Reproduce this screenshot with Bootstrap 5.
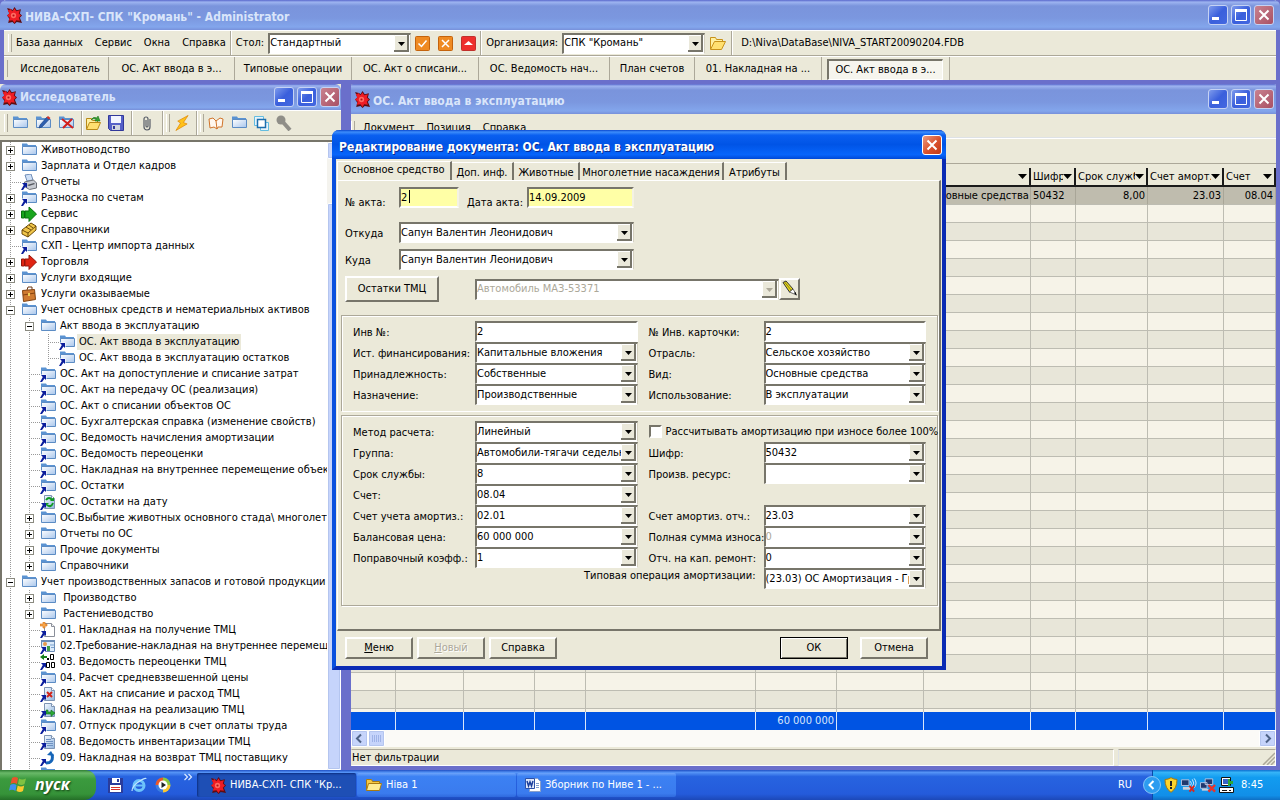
<!DOCTYPE html>
<html lang="ru">
<head>
<meta charset="utf-8">
<meta name="viewport" content="width=device-width, initial-scale=1">
<title>НИВА-СХП</title>
<link href="https://cdn.jsdelivr.net/npm/bootstrap@5.3.0/dist/css/bootstrap.min.css" rel="stylesheet">
<style>
:root{--face:#ebe9d9;--shade:#aca899;--frame:#6a6fcb;--deep:#77756a}
body{font-family:"DejaVu Sans Condensed","DejaVu Sans",sans-serif;font-size:11px;line-height:16px;color:#000;background:#5d66c6}
button,input,select{font:inherit;color:inherit;border-radius:0}
svg{flex:none;display:block}
.face{background:var(--face)}
.titlebar{height:26px;gap:3px;padding:0 6px 0 5px;background:linear-gradient(#5a68cc,#9db4f0 7%,#7a94dc 20%,#7b97df 60%,#83a6ec 90%,#7790da);color:#d9e5fa;font-size:12px;font-weight:bold;border-radius:6px 6px 0 0}
.titlebar.tall{height:30px}
.cap{width:20px;height:20px;padding:0;border:1px solid #c5d2f4;border-radius:3px;background:linear-gradient(135deg,#7e9bec,#3a5fdc 50%,#4468e0);display:flex;align-items:center;justify-content:center}
.cap-x{background:linear-gradient(135deg,#c9828f,#a95064)}
.cap-hot{border-color:#fff;background:linear-gradient(135deg,#eb9a80,#d9502b 55%,#c13a18)}
.grip{width:4px;align-self:stretch;margin:3px 0;border-left:1px solid #fff;border-right:1px solid var(--shade)}
.vsep{width:2px;align-self:stretch;border-left:1px solid var(--shade);border-right:1px solid #fff}
.link-plain{color:inherit;text-decoration:none;white-space:nowrap}
.field{height:21px;min-width:0;width:100%;padding:0 1px 1px 0;line-height:16px;background-color:#fff;border:2px solid;border-color:#77756a #fff #fff #77756a;outline:0;appearance:none;text-overflow:clip}
select.field{padding-right:16px;border-width:2px 1px 1px 2px;border-color:#77756a #d4d0c0 #fff #77756a;
background-image:url("data:image/svg+xml,%3Csvg xmlns='http://www.w3.org/2000/svg' width='15' height='17'%3E%3Cpath fill='%23eae8da' d='M0 0h15v17H0z'/%3E%3Cpath fill='none' stroke='%23fff' d='M.5 16V.5H14'/%3E%3Cpath fill='none' stroke='%2377756a' stroke-width='2' d='M0 16h14V0'/%3E%3Cpath d='M4 7h7l-3.5 4z'/%3E%3C/svg%3E");background-repeat:no-repeat;background-position:right 1px top 0}
.field:disabled{color:#aca899;opacity:1}
select.field.dim{background-image:url("data:image/svg+xml,%3Csvg xmlns='http://www.w3.org/2000/svg' width='15' height='17'%3E%3Cpath fill='%23eae8da' d='M0 0h15v17H0z'/%3E%3Cpath fill='none' stroke='%23fff' d='M.5 16V.5H14'/%3E%3Cpath fill='none' stroke='%2377756a' stroke-width='2' d='M0 16h14V0'/%3E%3Cpath fill='%23aca899' d='M4 7h7l-3.5 4z'/%3E%3C/svg%3E")}
.field.must{background-color:#ffffa6;border-right-color:#f4f2e4}
.caret{background-image:linear-gradient(#000,#000);background-size:1px 13px;background-position:8px 1px;background-repeat:no-repeat}
.raised{height:22px;padding:0 0 1px;background:var(--face);border:2px solid;border-color:#fff var(--deep) var(--deep) #fff;line-height:16px}
.raised:disabled{color:#aca899;text-shadow:1px 1px #fff}
.raised.main{border:1px solid #000;box-shadow:inset 1px 1px #fff,inset -1px -1px var(--deep)}

/* main window */
.app{height:84px;border:solid var(--frame);border-width:0 4px 4px}
.app .titlebar{margin:0 -4px}
.bar-menu{height:26px;border-top:1px solid #fff;border-bottom:1px solid var(--shade)}
.bar-tasks{height:24px;border-top:1px solid #fff;display:grid;grid-template-columns:8px 97px 126px 117px 127px 131px 85px 127px 127px 1fr}
.bar-tasks>*{border:0;border-right:1px solid var(--shade);background:none;padding:0;white-space:nowrap}
.bar-tasks .task-on{margin:2px 6px 0 5px;border:solid;border-width:2px 1px 1px 2px;border-color:#77756a #fff #fff #77756a;background:#f6f5ee}
.bar-tasks>:last-child{border-right:0;border-left:1px solid var(--shade)}
.pick{width:143px;flex:none}

/* explorer */
.explorer{width:347px;border:solid var(--frame);border-width:0 6px 0 0}
.explorer .titlebar{padding:0 1px 0 0}
.tools{height:26px;gap:7px;border-top:1px solid #fff;border-bottom:1px solid var(--shade)}
.tools .vsep{margin-right:-5px}
.tools .grip{margin-right:-3px}
.tree-pane{border:solid #77756a;border-width:2px 0 0 2px;background:#fff}
.tree{list-style:none;margin:0;padding:0}
.tree li{display:flex;height:16px;white-space:nowrap}
.tree .guide{width:19px;flex:none;background:linear-gradient(#999 50%,transparent 50%) 8px 0/1px 2px repeat-y}
.tree .guide i{display:block;height:1px;margin:8px 0 0 8px;background:linear-gradient(90deg,#999 50%,transparent 50%) 0 0/2px 1px}
.tree .knob{width:9px;height:9px;margin:4px 0 0 4px;border:1px solid #8a8a80;background:#fff}
.tree .caption-text{padding:0 2px;margin-left:2px}
.tree .on{background:var(--face)}
.vscroll{width:14px;background:#f4f3ee}
.thumb{background:#c6d4fb;border:1px solid #fff;outline:1px solid #b4c5ef;outline-offset:-2px;border-radius:2px}

/* grid window */
.gridwin{border:solid var(--frame);border-width:0 4px 4px}
.gridwin .titlebar{margin:0 -4px;height:30px;border-left:1px solid #4850b8}
.ledger{table-layout:fixed;width:100%;border-collapse:separate;border-spacing:0}
.ledger th{height:19px;padding:0 2px;font-weight:normal;border-right:2px solid #1a1a1a;border-bottom:2px solid #1a1a1a;background:var(--face)}
.ledger td{height:18px;padding:0 2px;line-height:16px;border-right:1px solid #bdbcb2;border-bottom:1px solid #bdbcb2;background:#f6f3e8;overflow:hidden;white-space:nowrap}
.ledger tr:nth-child(odd) td{background:#e8e6d9}
.ledger tbody tr:first-child td{background:#bfbcae;border-right-color:#a9a698}
.ledger tfoot td,.ledger tr:nth-child(odd) td.sum{background:#0054e3}
.ledger tfoot td{color:#d8e6fb;border-right-color:#d8e6fb;border-bottom:0;text-align:right}
.hscroll{height:17px;background:#fbfaf7}
.status>*{border:1px solid;border-color:var(--shade) #fff #fff transparent;height:17px;margin-top:2px}

/* dialog */
.dialog{position:absolute;left:332px;top:130px;width:614px;height:540px;border:solid;border-width:0 4px 4px;border-color:#0a3fd0 #0a2bb4 #0a2bb4 #0a50de;border-radius:7px 7px 0 0}
.dialog .titlebar{margin:0 -4px;height:29px;padding:0 4px 0 7px;border-radius:7px 7px 0 0;color:#fff;text-shadow:1px 1px #0a2a90;background:linear-gradient(#0a47cf,#3d8dfb 7%,#0a5ff0 18%,#0054e6 50%,#0765fb 85%,#0048d6)}
.tabs{height:22px;padding:2px 1px 0 1px}
.tabs button{border:0;border-top:1px solid #fff;border-right:2px solid var(--deep);background:none;padding:2px 0 0;height:19px;margin-top:1px;white-space:nowrap;line-height:16px}
.tabs button.active{height:20px;margin-top:0;padding:0 0 3px;background:var(--face);border-left:1px solid #fff}
.page{border:solid;border-width:1px 2px 2px 1px;border-color:#fff var(--deep) var(--deep) #fff;margin:-1px 1px 0;padding:6px 1px 22px 3px}
.lines{display:grid;row-gap:6px;padding-left:4px;margin-bottom:13px}
.spaced{padding-top:5px}
.groupbox{border:1px solid var(--shade);box-shadow:inset 1px 1px #fff,1px 1px #fff;padding:5px 11px 0 11px;display:grid;grid-template-columns:122px 163fr 11px 115px 163fr;grid-auto-rows:21px}
.groupbox label{white-space:nowrap;padding-top:4px}
.groupbox .flush{padding-top:0}
.tick{appearance:none;flex:none;width:13px;height:13px;margin:0;background:#fff;border:2px solid;border-color:#77756a #fff #fff #77756a}
.foot{padding:6px 14px 7px 9px}
.foot .raised{width:68px}

/* taskbar */
.taskbar{height:30px;background:linear-gradient(#1f4fc4,#5594f6 8%,#2763e0 22%,#245bdb 80%,#1c48b8);color:#fff}
.start{width:96px;border:0;border-radius:0 10px 12px 0;background:linear-gradient(#2f7d33,#69b968 10%,#3b9a3e 30%,#369339 80%,#246e27);color:#fff;font:italic bold 16px "Open Sans","Noto Sans",sans-serif;text-shadow:1px 1px 2px #123d12;padding:0 0 2px 9px}
.winbtn{width:159px;height:24px;margin:3px 1px 0 0;padding:0 8px;border:0;border-radius:2px;background:linear-gradient(#6ea4fa,#3c81f3 15%,#3a7bee 85%,#2f69dd);color:#fff;white-space:nowrap}
.winbtn.on{background:#1e4fb5;box-shadow:inset 1px 1px 2px #0d2f80}
.tray{width:128px;gap:3px;background:linear-gradient(#0d6fd0,#35b4f8 8%,#129cf0 25%,#118fe8 85%,#0f6fc4);border-left:1px solid #0a4aa8}
.tray .chevron{margin-left:-10px}
</style>
</head>
<body class="vh-100 overflow-hidden d-flex flex-column position-relative">

<svg width="0" height="0" class="position-absolute" aria-hidden="true">
<defs>
<linearGradient id="gf" x1="0" y1="0" x2="1" y2="1"><stop offset="0" stop-color="#fff"/><stop offset="1" stop-color="#a9c6ec"/></linearGradient>
<linearGradient id="gg" x1="0" y1="0" x2="1" y2="1"><stop offset="0" stop-color="#f6fbff"/><stop offset="1" stop-color="#8fb4e0"/></linearGradient>
<symbol id="star" viewBox="0 0 16 16"><path fill="#5c0d12" d="M4 0l3 3 2-3 2 3 4-1-1 4 2 2-2 2 2 5-5-1-2 2-2-2-4 1 1-4-2-3 2-2-2-5 4 1z"/><path fill="#ee1c24" d="M4.500 1.500l2.500 2.500 2-2.500 1.500 2.500 3.500-1-1 3 2 2-2 2 1 3-3.500-.5L9 15l-2-2.500-3.500.5 1-3L2 8l2-2-1.500-3.500 2 .5z"/><circle cx="8" cy="8" r="2.500" fill="#ff6a60"/><circle cx="8" cy="8" r="1" fill="#b01218"/></symbol>
<symbol id="folder" viewBox="0 0 16 16"><path fill="#5b93d2" d="M1 1.500h5l1 1.500h8v3H1z"/><path fill="url(#gf)" stroke="#5c8cc4" d="M1.500 4.500h14v8h-14z"/></symbol>
<symbol id="arrow" viewBox="0 0 16 16"><path fill="#0a1d9c" d="M1 9h5v5l-1.500-1.500L2 16H0l2.800-5z"/></symbol>
<symbol id="sfolder" viewBox="0 0 16 16"><use href="#folder"/><path fill="#fff" d="M0 8.500h6.500V14H0z"/><use href="#arrow"/></symbol>
<symbol id="page" viewBox="0 0 16 16"><path fill="url(#gg)" stroke="#7d94b4" d="M4.500 1.500h7l3 3v10h-10z"/><path fill="#fff" stroke="#7d94b4" d="M11.500 1.500v3h3"/></symbol>
<symbol id="printer" viewBox="0 0 16 16"><path fill="#cfe0f6" stroke="#6f8db8" d="M4 1l6-1 2 6-6 1z"/><path fill="#c8cbd2" stroke="#6d7078" d="M3.500 8l9-2 3 3v5l-7 1.500-5-3z"/><path fill="#55585f" d="M6 11l7-2 1 1-6 2z"/><use href="#arrow"/></symbol>
<symbol id="garrow" viewBox="0 0 16 16"><path fill="#19a51d" stroke="#08720d" d="M.5 5h3v7h-3zM4 5h4V1l7.500 7L8 15.500V12H4z"/></symbol>
<symbol id="rarrow" viewBox="0 0 16 16"><path fill="#e02412" stroke="#95140a" d="M.5 5h3v7h-3zM4 5h4V1l7.500 7L8 15.500V12H4z"/></symbol>
<symbol id="book" viewBox="0 0 16 16"><path fill="#f1c64a" stroke="#6d4b08" d="M1 8l9-7 5 3v4l-8 7-6-3z"/><path fill="none" stroke="#6d4b08" d="M1 8l6 3 8-7M7 11v4M5 5l5 3M8 3l4 3"/></symbol>
<symbol id="case" viewBox="0 0 16 16"><path fill="none" stroke="#6b3510" d="M6 4l1-3 4 0v3"/><path fill="#cf7a30" stroke="#84430f" d="M1.500 4.500l12-1 1 10-12 2z"/><path stroke="#84430f" d="M2 9l12-2"/><path fill="#f2cf58" d="M7 7h2v3H7z"/></symbol>
<symbol id="refresh" viewBox="0 0 16 16"><use href="#page"/><path fill="none" stroke="#119a22" stroke-width="2" d="M6 6q3-4 6 0M13 9q-2 5-6 2"/><path fill="#119a22" d="M10 7h4V3zM9 9H5v4z"/><use href="#arrow"/></symbol>
<symbol id="padd" viewBox="0 0 16 16"><path fill="#fff" stroke="#8a8f9a" d="M4.500 1.500h7l3 3v10h-10z"/><path fill="#f6f6f6" stroke="#8a8f9a" d="M11.500 1.500v3h3"/><path fill="#f7a64a" stroke="#d9731a" stroke-width=".6" d="M3 0h2v2h2v2H5v2H3V4H0V2h3z"/><use href="#arrow"/></symbol>
<symbol id="pform" viewBox="0 0 16 16"><path fill="#dcebfa" stroke="#6c8db6" d="M1.500 2.500h13v11h-13z"/><path fill="#6c8db6" d="M1 2h14v2H1z"/><circle cx="5" cy="6" r="2" fill="#e79a4a"/><path fill="#3f9f48" d="M7 8h3v5H7z"/><path stroke="#7ba1cf" d="M10 7h4M11 9.500h3"/><path fill="#fff" d="M0 9h6v5H0z"/><use href="#arrow"/></symbol>
<symbol id="reval" viewBox="0 0 16 16"><path fill="#15801a" d="M0 3l4-3v2h3v2H4v2z"/><path fill="none" stroke="#000" d="M10.500.5h3v5h-3zM6.500 8.500h3v5h-3zM11.500 8.500h3v5h-3z"/><path d="M7 4h2v2H7z"/><use href="#arrow"/></symbol>
<symbol id="pdel" viewBox="0 0 16 16"><use href="#page"/><path stroke="#d0231a" stroke-width="2" d="M7 6l5 5M12 6l-5 5"/><use href="#arrow"/></symbol>
<symbol id="psell" viewBox="0 0 16 16"><use href="#page"/><path fill="#2ba838" stroke="#0d6d18" stroke-width=".6" d="M6 8v4h5v2.500l4-3.500-4-3v2H8V8z"/><use href="#arrow"/></symbol>
<symbol id="ptext" viewBox="0 0 16 16"><use href="#page"/><path stroke="#6f92c2" d="M6 5.500h5M6 7.500h7M6 9.500h7M7 11.500h6"/><use href="#arrow"/></symbol>
<symbol id="back" viewBox="0 0 16 16"><path fill="none" stroke="#1565b8" stroke-width="3" d="M6 13q8 0 6-9"/><path fill="#1565b8" d="M7 5l4-4 3 5z"/><use href="#arrow"/></symbol>
<symbol id="openf" viewBox="0 0 18 16"><path fill="#fff0a0" stroke="#c8921a" d="M1.500 14V2.500h5l1 2h6V7"/><path fill="#ffe070" stroke="#c8921a" d="M1.500 14.500l4-8h11l-4 8z"/></symbol>
<symbol id="shutf" viewBox="0 0 17 16"><path fill="#f6c944" stroke="#a87a12" d="M1.500 13.500v-11h5l1 2h7v3"/><path fill="#ffec94" stroke="#a87a12" d="M1.500 13.500l2-7h13l-2 7z"/></symbol>
<symbol id="xx" viewBox="0 0 12 12"><path stroke="#fff" stroke-width="2" d="M1.500 1.500l9 9M10.500 1.500l-9 9"/></symbol>
<symbol id="mx" viewBox="0 0 12 12"><path fill="none" stroke="#fff" d="M.5.5h11v11H.5z"/><path fill="#fff" d="M0 0h12v3H0z"/></symbol>
<symbol id="mn" viewBox="0 0 12 12"><path fill="#fff" d="M0 8h7v3H0z"/></symbol>
</defs>
</svg>

<!-- main window -->
<header class="app face flex-shrink-0">
  <div class="titlebar tall d-flex align-items-center">
    <svg width="17" height="17"><use href="#star"/></svg>
    <span class="flex-fill text-nowrap pt-1">НИВА-СХП- СПК "Кромань" - Administrator</span>
    <button class="cap" aria-label="Свернуть"><svg width="12" height="12"><use href="#mn"/></svg></button>
    <button class="cap" aria-label="Развернуть"><svg width="12" height="12"><use href="#mx"/></svg></button>
    <button class="cap cap-x" aria-label="Закрыть"><svg width="12" height="12"><use href="#xx"/></svg></button>
  </div>
  <div class="bar-menu d-flex align-items-center">
    <span class="grip ms-1"></span>
    <nav class="d-flex gap-2">
      <a href="#" class="link-plain ps-1 me-1">База данных</a><a href="#" class="link-plain me-1">Сервис</a><a href="#" class="link-plain me-1">Окна</a><a href="#" class="link-plain me-1">Справка</a>
    </nav>
    <span class="vsep me-1"></span>
    <label for="desk" class="pe-1">Стол:</label>
    <div class="pick"><select id="desk" class="field"><option>Стандартный</option></select></div>
    <div class="d-flex ps-1 gap-2">
      <svg width="15" height="15" viewBox="0 0 15 15"><rect x=".5" y=".5" width="14" height="14" rx="1" fill="#ef8a22" stroke="#c4630c"/><path fill="none" stroke="#fff" stroke-width="1.500" d="M3.500 7.500l3 3 5-6"/></svg>
      <svg width="15" height="15" viewBox="0 0 15 15"><rect x=".5" y=".5" width="14" height="14" rx="1" fill="#ef8a22" stroke="#c4630c"/><path stroke="#fff" stroke-width="1.500" d="M4 4l7 7M11 4l-7 7"/></svg>
      <svg width="15" height="15" viewBox="0 0 15 15"><rect x=".5" y=".5" width="14" height="14" rx="1" fill="#ee2f2c" stroke="#c0302c"/><path fill="#fff" d="M3 9l4.500-4L12 9z"/></svg>
    </div>
    <span class="vsep ms-1"></span>
    <label for="org" class="px-1">Организация:</label>
    <div class="pick"><select id="org" class="field"><option>СПК "Кромань"</option></select></div>
    <svg width="18" height="16" class="ms-1"><use href="#openf"/></svg>
    <span class="vsep ms-1 me-2"></span>
    <span class="text-nowrap">D:\Niva\DataBase\NIVA_START20090204.FDB</span>
  </div>
  <div class="bar-tasks">
    <span class="grip"></span>
    <button>Исследователь</button><button>ОС. Акт ввода в э...</button><button>Типовые операции</button><button>ОС. Акт о списани...</button><button>ОС. Ведомость нач...</button><button>План счетов</button><button>01. Накладная на ...</button><button class="task-on">ОС. Акт ввода в э...</button><span></span>
  </div>
</header>

<main class="d-flex flex-fill overflow-hidden">
  <!-- explorer -->
  <section class="explorer face d-flex flex-column flex-shrink-0">
    <div class="titlebar d-flex align-items-center flex-shrink-0">
      <svg width="17" height="17"><use href="#star"/></svg>
      <span class="flex-fill">Исследователь</span>
      <button class="cap" aria-label="Свернуть"><svg width="12" height="12"><use href="#mn"/></svg></button>
      <button class="cap" aria-label="Развернуть"><svg width="12" height="12"><use href="#mx"/></svg></button>
      <button class="cap cap-x" aria-label="Закрыть"><svg width="12" height="12"><use href="#xx"/></svg></button>
    </div>
    <div class="tools d-flex align-items-center flex-shrink-0 ps-1">
      <span class="grip"></span>
      <svg width="16" height="16"><use href="#folder"/></svg>
      <svg width="16" height="16" viewBox="0 0 16 16"><use href="#folder"/><path fill="#2d5fb0" stroke="#173a78" stroke-width=".6" d="M4 13l1-3 7-8 2.500 2L7 12z"/><path fill="#d2342a" d="M11.500 2.500L13 1l2.500 2-1.500 1.500z"/></svg>
      <svg width="16" height="16" viewBox="0 0 16 16"><use href="#folder"/><path stroke="#d3201c" stroke-width="2" d="M4 4l11 9M14 4L5 13"/></svg>
      <span class="vsep"></span>
      <svg width="16" height="16" viewBox="0 0 16 16"><path fill="#fff0a0" stroke="#b98a18" d="M1.500 14V3.500h5l1 2h5V8"/><path fill="#ffe070" stroke="#b98a18" d="M1.500 14.500l3-7h11l-3 7z"/><path fill="#3aa334" stroke="#17701a" stroke-width=".6" d="M6 5q2-4 6-2l1-2 2 5-5 0 1-2q-3-1-5 1z"/></svg>
      <svg width="16" height="16" viewBox="0 0 16 16"><path fill="#5560c8" stroke="#31389a" d="M.5.5h15v15h-13l-2-2z"/><path fill="#f2f4ff" d="M3 1h10v7H3z"/><path fill="#cfd3de" d="M4 10h8v5H4z"/><path fill="#31389a" d="M5 11h2v3H5z"/></svg>
      <span class="vsep"></span>
      <svg width="16" height="16" class="ms-1" viewBox="0 0 16 16"><path fill="none" stroke="#555b66" stroke-width="1.200" d="M11 4v8a3 3 0 0 1-6 0V4a2 2 0 0 1 4 0v7a1 1 0 0 1-2 0V5"/></svg>
      <span class="vsep"></span><span class="grip"></span>
      <svg width="15" height="16" viewBox="0 0 16 16"><path fill="#ffc21a" stroke="#e08a08" stroke-width=".8" d="M15 0L4 6l3 2-5 8L14 9l-4-1.500z"/></svg>
      <span class="vsep"></span><span class="grip"></span>
      <svg width="16" height="16" viewBox="0 0 16 16"><path fill="#fff7ee" stroke="#d0742a" d="M1 4l4-1 3 3 1 8-3-2-4 1zM8 6l4-3 3 1-1 8-4-0-1 2"/></svg>
      <svg width="16" height="16"><use href="#folder"/></svg>
      <svg width="15" height="15" viewBox="0 0 15 15"><path fill="#e8f4fb" stroke="#64bde0" d="M.5.5h9v9h-9zM6.500 6.500h8v8h-8z"/><path fill="#fff" stroke="#1d6fae" stroke-width="1.500" d="M3.500 3.500h8v8h-8z"/></svg>
      <svg width="16" height="16" viewBox="0 0 16 16"><circle cx="5" cy="5" r="4.500" fill="#8f8e88"/><path stroke="#8f8e88" stroke-width="4" d="M6 6l8 9"/></svg>
    </div>
    <div class="tree-pane d-flex flex-fill overflow-hidden mt-1">
      <div class="flex-fill overflow-hidden"><ul id="tree" class="tree"></ul></div>
      <div class="vscroll d-flex flex-column flex-shrink-0">
        <div class="thumb" style="height:17px"></div>
        <div style="height:44px"></div>
        <div class="thumb flex-fill"></div>
      </div>
    </div>
  </section>

  <!-- document list -->
  <section class="gridwin face d-flex flex-column flex-fill overflow-hidden">
    <div class="titlebar d-flex align-items-center flex-shrink-0">
      <svg width="17" height="17"><use href="#star"/></svg>
      <span class="flex-fill text-nowrap pt-1">ОС. Акт ввода в эксплуатацию</span>
      <button class="cap" aria-label="Свернуть"><svg width="12" height="12"><use href="#mn"/></svg></button>
      <button class="cap" aria-label="Развернуть"><svg width="12" height="12"><use href="#mx"/></svg></button>
      <button class="cap cap-x" aria-label="Закрыть"><svg width="12" height="12"><use href="#xx"/></svg></button>
    </div>
    <div class="d-flex align-items-center flex-shrink-0 border-bottom pt-1" style="height:24px">
      <span class="grip me-2"></span>
      <a href="#" class="link-plain me-2">Документ</a><a href="#" class="link-plain me-2 ms-1">Позиция</a><a href="#" class="link-plain ms-1">Справка</a>
    </div>
    <div class="tools flex-shrink-0 mb-1"></div>
    <div class="flex-fill overflow-hidden">
      <table class="ledger">
        <colgroup><col style="width:45px"><col style="width:68px"><col style="width:71px"><col style="width:51px"><col style="width:170px"><col style="width:81px"><col style="width:87px"><col style="width:107px"><col style="width:45px"><col style="width:72px"><col style="width:76px"><col></colgroup>
        <thead><tr id="head"></tr></thead>
        <tbody id="rows"></tbody>
      </table>
    </div>
    <table class="ledger flex-shrink-0">
      <colgroup><col style="width:45px"><col style="width:68px"><col style="width:71px"><col style="width:51px"><col style="width:170px"><col style="width:81px"><col style="width:87px"><col style="width:107px"><col style="width:45px"><col style="width:72px"><col style="width:76px"><col></colgroup>
      <tfoot><tr><td class="sum"></td><td class="sum"></td><td class="sum"></td><td class="sum"></td><td class="sum"></td><td class="sum">60 000 000</td><td class="sum"></td><td class="sum"></td><td class="sum"></td><td class="sum"></td><td class="sum"></td><td class="sum"></td></tr></tfoot>
    </table>
    <div class="hscroll d-flex flex-shrink-0">
      <div class="thumb" style="width:17px"><svg width="15" height="15" viewBox="0 0 15 15"><path fill="none" stroke="#4d6185" stroke-width="2" d="M9 3.500l-4 4 4 4"/></svg></div>
      <div class="thumb" style="width:17px"><svg width="15" height="15" viewBox="0 0 15 15"><path stroke="#9fb3e8" d="M3.500 4v7M5.500 4v7M7.500 4v7M9.500 4v7M11.500 4v7"/></svg></div>
      <div class="thumb ms-auto" style="width:17px"><svg width="15" height="15" viewBox="0 0 15 15"><path fill="none" stroke="#4d6185" stroke-width="2" d="M6 3.500l4 4-4 4"/></svg></div>
    </div>
    <div class="status d-flex flex-shrink-0 gap-1">
      <div class="flex-fill">Нет фильтрации</div>
      <div class="d-flex justify-content-end border-start" style="width:158px"><svg width="13" height="15" viewBox="0 0 13 15"><path stroke="#aca899" stroke-width="1.500" d="M1 15L13 3M5 15l8-8M9 15l4-4"/></svg></div>
    </div>
  </section>
</main>

<!-- document editor -->
<form class="dialog face d-flex flex-column" onsubmit="return false">
  <div class="titlebar d-flex align-items-center flex-shrink-0">
    <span class="flex-fill text-nowrap pt-1">Редактирование документа: ОС. Акт ввода в эксплуатацию</span>
    <button type="button" class="cap cap-hot" aria-label="Закрыть"><svg width="12" height="12"><use href="#xx"/></svg></button>
  </div>
  <div class="tabs d-flex flex-shrink-0">
    <button type="button" class="active" style="width:115px">Основное средство</button><button type="button" style="width:62px">Доп. инф.</button><button type="button" style="width:66px">Животные</button><button type="button" style="width:144px">Многолетние насаждения</button><button type="button" style="width:63px">Атрибуты</button>
  </div>
  <div class="page flex-fill">
    <div class="lines">
      <div class="d-flex">
        <label for="num" class="pt-2" style="width:54px">№ акта:</label>
        <div style="width:60px"><input id="num" class="field must caret" value="2"></div>
        <label for="date" class="pt-2 ps-2 text-nowrap" style="width:68px">Дата акта:</label>
        <div style="width:107px"><input id="date" class="field must" value="14.09.2009"></div>
      </div>
      <div class="d-flex spaced">
        <label for="from" class="pt-1" style="width:54px">Откуда</label>
        <div style="width:235px"><select id="from" class="field"><option>Сапун Валентин Леонидович</option></select></div>
      </div>
      <div class="d-flex">
        <label for="to" class="pt-1" style="width:54px">Куда</label>
        <div style="width:235px"><select id="to" class="field"><option>Сапун Валентин Леонидович</option></select></div>
      </div>
      <div class="d-flex align-items-center">
        <button type="button" class="raised" style="width:94px;height:26px">Остатки ТМЦ</button>
        <div style="width:36px"></div>
        <div style="width:304px"><select class="field dim" disabled aria-label="Объект"><option>Автомобиль МАЗ-53371</option></select></div>
        <button type="button" class="raised d-flex p-0" style="width:21px" aria-label="Изменить"><svg width="17" height="17" viewBox="0 0 17 17"><path fill="#e6d81c" stroke="#333" d="M2 2.500l3-1.500 7 8-3.500 3z"/><path stroke="#8c8210" d="M3.500 2l7 8.500"/><path fill="#fff" stroke="#333" stroke-width=".7" d="M8.500 12l3.500-3 3.500 6z"/><path d="M13 13l2.500 2.500-1-3.500z"/></svg></button>
      </div>
    </div>

    <div class="groupbox mb-1 border-bottom-0" style="height:96px">
      <label for="a1">Инв №:</label><input id="a1" class="field" value="2"><span></span><label for="b1">№ Инв. карточки:</label><input id="b1" class="field" value="2">
      <label for="a2">Ист. финансирования:</label><select id="a2" class="field"><option>Капитальные вложения</option></select><span></span><label for="b2">Отрасль:</label><select id="b2" class="field"><option>Сельское хозяйство</option></select>
      <label for="a3">Принадлежность:</label><select id="a3" class="field"><option>Собственные</option></select><span></span><label for="b3">Вид:</label><select id="b3" class="field"><option>Основные средства</option></select>
      <label for="a4">Назначение:</label><select id="a4" class="field"><option>Производственные</option></select><span></span><label for="b4">Использование:</label><select id="b4" class="field"><option>В эксплуатации</option></select>
    </div>

    <div class="groupbox" style="height:191px">
      <label for="c1">Метод расчета:</label><select id="c1" class="field"><option>Линейный</option></select><span></span>
      <div class="d-flex align-items-center" style="grid-column:span 2"><input type="checkbox" class="tick" id="over"><label for="over" class="p-0 ms-1">Рассчитывать амортизацию при износе более 100%</label></div>
      <label for="c2">Группа:</label><select id="c2" class="field"><option>Автомобили-тягачи седельные</option></select><span></span><label for="d2">Шифр:</label><select id="d2" class="field"><option>50432</option></select>
      <label for="c3">Срок службы:</label><select id="c3" class="field"><option>8</option></select><span></span><label for="d3">Произв. ресурс:</label><select id="d3" class="field"><option></option></select>
      <label for="c4">Счет:</label><select id="c4" class="field"><option>08.04</option></select><span style="grid-column:span 3"></span>
      <label for="c5">Счет учета амортиз.:</label><select id="c5" class="field"><option>02.01</option></select><span></span><label for="d5">Счет амортиз. отч.:</label><select id="d5" class="field"><option>23.03</option></select>
      <label for="c6">Балансовая цена:</label><select id="c6" class="field"><option>60 000 000</option></select><span></span><label for="d6">Полная сумма износа:</label><select id="d6" class="field" disabled><option>0</option></select>
      <label for="c7">Поправочный коэфф.:</label><select id="c7" class="field"><option>1</option></select><span></span><label for="d7">Отч. на кап. ремонт:</label><select id="d7" class="field"><option>0</option></select>
      <label for="c8" class="flush text-end pe-2" style="grid-column:span 4">Типовая операция амортизации:</label><select id="c8" class="field"><option>(23.03) ОС Амортизация - Группа</option></select>
    </div>
  </div>
  <div class="foot d-flex gap-1 flex-shrink-0">
    <button type="button" class="raised"><u>М</u>еню</button>
    <button type="button" class="raised" disabled><u>Н</u>овый</button>
    <button type="button" class="raised">Справка</button>
    <button class="raised main ms-auto me-2">ОК</button>
    <button type="button" class="raised">Отмена</button>
  </div>
</form>

<!-- taskbar -->
<footer class="taskbar d-flex flex-shrink-0">
  <button class="start d-flex align-items-center gap-2">
    <svg width="18" height="18" viewBox="0 0 18 18"><path fill="#e8542c" d="M3 3q3-2 6 0L8 9Q5 7 1.500 9z"/><path fill="#7fc242" d="M10 3.500q3 2 7 0L15.500 9q-3 2-6.500 0z"/><path fill="#3f8ff0" d="M1.300 10q3-2 6.200 0L6.500 16q-3-2-6.500-.5z"/><path fill="#fbc92e" d="M8.700 10.500q3 2 6.500 0L14 16q-3 2-6.500 0z"/></svg>
    <span>пуск</span>
  </button>
  <div class="d-flex align-items-center gap-2 ps-2 ms-1" style="width:97px">
    <svg width="15" height="15" viewBox="0 0 15 15"><path fill="#2a3c9c" d="M0 0h15v15H0z"/><path fill="#fff" d="M4 0h8v5H4zM2 7h11v7H2z"/><path stroke="#d8322a" d="M3 9.500h9M3 11.500h9"/><path fill="#2a3c9c" d="M9 1h2v3H9z"/></svg>
    <svg width="16" height="16" viewBox="0 0 16 16"><circle cx="8" cy="8.500" r="5" fill="none" stroke="#6dc3fb" stroke-width="3"/><path stroke="#6dc3fb" stroke-width="2" d="M4 8.500h9"/><path fill="none" stroke="#bfe6ff" stroke-width="1.200" d="M1 14Q1 9 8 4.500T15 2"/></svg>
    <svg width="16" height="16" viewBox="0 0 16 16"><circle cx="8" cy="8" r="7.500" fill="#3b7de0"/><path fill="#e8572a" d="M8 8V.5A7.500 7.500 0 0 0 .5 8z"/><path fill="#8bc63f" d="M8 8h7.500A7.500 7.500 0 0 0 8 .5z"/><path fill="#fbc531" d="M8 8v7.500A7.500 7.500 0 0 0 15.500 8z"/><circle cx="8" cy="8" r="4.500" fill="#fff"/><path fill="#222" d="M6.500 5l4.500 3-4.500 3z"/></svg>
    <svg width="10" height="8" class="ms-1 mb-3" viewBox="0 0 10 8"><path fill="none" stroke="#dce9ff" stroke-width="1.200" d="M1.500 1l3 3-3 3M5.500 1l3 3-3 3"/></svg>
  </div>
  <button class="winbtn on d-flex align-items-center gap-1"><svg width="17" height="17" class="ms-1"><use href="#star"/></svg>НИВА-СХП- СПК "Кр...</button>
  <button class="winbtn d-flex align-items-center gap-1"><svg width="17" height="16"><use href="#shutf"/></svg>Ніва 1</button>
  <button class="winbtn d-flex align-items-center gap-1"><svg width="16" height="16" viewBox="0 0 16 16"><path fill="#fff" stroke="#8aa0c8" d="M4.500 1.500h8l3 3v10h-11z"/><path stroke="#7f9ccc" d="M11 6.500h3M11 8.500h3M11 10.500h3"/><path fill="#dfe8fa" stroke="#2b50a8" d="M.5 1.500h9v10h-9z"/><path fill="none" stroke="#1b3f9c" stroke-width="1.500" d="M2 4l1.500 5L5 5l1.500 4L8 4"/></svg>Зборник по Ниве 1 - ...</button>
  <span class="ms-auto align-self-center me-3 pe-1">RU</span>
  <div class="tray d-flex align-items-center">
    <svg width="18" height="18" class="chevron" viewBox="0 0 18 18"><circle cx="9" cy="9" r="8.500" fill="#2d9cf0" stroke="#9fd4fb" stroke-width=".8"/><path fill="none" stroke="#fff" stroke-width="2" d="M10.500 5l-4 4 4 4"/></svg>
    <svg width="14" height="16" viewBox="0 0 14 16"><path fill="#fbd42c" stroke="#a87808" d="M7 .7q3 1.800 6 1.800 0 9-6 12.800Q1 11.500 1 2.500q3 0 6-1.800z"/><path fill="#222" d="M6 4h2v5H6zM6 10h2v2H6z"/></svg>
    <svg width="16" height="16" viewBox="0 0 17 16"><path fill="#20386e" stroke="#b6c6e4" d="M.5 2.500h8v6h-8z"/><path fill="#c9d0dc" d="M2 10h8v3H2z"/><path fill="none" stroke="#d9ecff" d="M10 4q2 2 0 5M12 2q3 4 0 8M14 1q4 5 0 10"/><path stroke="#d8281e" stroke-width="2" d="M9 9l5 6M14 9l-5 6"/></svg>
    <svg width="16" height="16" viewBox="0 0 17 16"><path fill="#20386e" stroke="#b6c6e4" d="M5.500 1.500h8v6h-8zM.5 5.500h7v6h-7z"/><path fill="#c9d0dc" d="M2 12h7v2H2z"/><path stroke="#e8342a" stroke-width="2.500" d="M9 8l7 7M16 8l-7 7"/></svg>
    <svg width="15" height="16" class="me-1" viewBox="0 0 15 16"><path fill="#fff" stroke="#111" d="M2.500.5h9v8h-9zM.5 10.500h14v5H.5z"/><path fill="#3563c8" d="M4 2h6v5H4z"/><path fill="#2aa836" d="M9 2h2v2h3v3h-3v2H9z"/><path stroke="#111" d="M3 13.500h5M10 13.500h2"/></svg>
    <span>8:45</span>
  </div>
</footer>

<script>
// level, state (+ collapsed, - expanded, . leaf), icon, caption, optional class of the caption
const nodes = [
[0,'+','folder','Животноводство'],[0,'+','folder','Зарплата и Отдел кадров'],[0,'.','printer','Отчеты'],[0,'+','sfolder','Разноска по счетам'],
[0,'+','garrow','Сервис'],[0,'+','book','Справочники'],[0,'.','sfolder','СХП - Центр импорта данных'],[0,'+','rarrow','Торговля'],
[0,'+','folder','Услуги входящие'],[0,'+','case','Услуги оказываемые'],[0,'-','folder','Учет основных средств и нематериальных активов'],
[1,'-','folder','Акт ввода в эксплуатацию'],[2,'.','sfolder','ОС. Акт ввода в эксплуатацию','on'],[2,'.','sfolder','ОС. Акт ввода в эксплуатацию остатков'],
[1,'.','sfolder','ОС. Акт на допоступление и списание затрат'],[1,'.','sfolder','ОС. Акт на передачу ОС (реализация)'],[1,'.','sfolder','ОС. Акт о списании объектов ОС'],
[1,'.','sfolder','ОС. Бухгалтерская справка (изменение свойств)'],[1,'.','sfolder','ОС. Ведомость начисления амортизации'],[1,'.','sfolder','ОС. Ведомость переоценки'],
[1,'.','sfolder','ОС. Накладная на внутреннее перемещение объект'],[1,'.','sfolder','ОС. Остатки'],[1,'.','refresh','ОС. Остатки на дату'],
[1,'+','folder','ОС.Выбытие животных основного стада\\ многолетн'],[1,'+','folder','Отчеты по ОС'],[1,'+','folder','Прочие документы'],[1,'+','folder','Справочники'],
[0,'-','folder','Учет производственных запасов и готовой продукции'],[1,'+','folder','\u00a0Производство'],[1,'+','folder','\u00a0Растениеводство'],
[1,'.','padd','01. Накладная на получение ТМЦ'],[1,'.','pform','02.Требование-накладная на внутреннее перемеще'],[1,'.','reval','03. Ведомость переоценки ТМЦ'],
[1,'.','sfolder','04. Расчет средневзвешенной цены'],[1,'.','pdel','05. Акт на списание и расход ТМЦ'],[1,'.','psell','06. Накладная на реализацию ТМЦ'],
[1,'.','sfolder','07. Отпуск продукции в счет оплаты труда'],[1,'.','ptext','08. Ведомость инвентаризации ТМЦ'],[1,'.','back','09. Накладная на возврат ТМЦ поставщику'],[1,'.','folder','']];
document.getElementById('tree').innerHTML = nodes.map(([lv,st,ic,tx,on]) => {
  const knob = st === '.' ? '<i></i>' : `<svg class="knob" viewBox="0 0 7 7"><path stroke="#000" d="M1 3.500h5${st === '+' ? 'M3.500 1v5' : ''}"/></svg>`;
  return '<li>' + '<span class="guide"></span>'.repeat(lv) + `<span class="guide">${knob}</span><svg width="16" height="16"><use href="#${ic}"/></svg><span class="caption-text ${on||''}">${tx}</span></li>`;
}).join('');

const heads = ['','','','','','','','','Шифр','Срок службы','Счет аморт.','Счет'];
document.getElementById('head').innerHTML = heads.map(h => `<th><div class="d-flex align-items-center"><span class="flex-fill overflow-hidden text-nowrap">${h}</span><svg width="9" height="5" viewBox="0 0 9 5"><path d="M0 0h9L4.500 5z"/></svg></div></th>`).join('');
const first = ['','','','','','','','Основные средства','50432','8,00','23.03','08.04'];
const cells = vals => '<tr>' + vals.map((v,i) => `<td class="${i > 6 && i !== 8 ? 'text-end' : ''}">${v}</td>`).join('') + '</tr>';
document.getElementById('rows').innerHTML = cells(first) + cells(Array(12).fill('')).repeat(60);
</script>
<script src="https://cdn.jsdelivr.net/npm/bootstrap@5.3.0/dist/js/bootstrap.bundle.min.js"></script>
</body>
</html>
